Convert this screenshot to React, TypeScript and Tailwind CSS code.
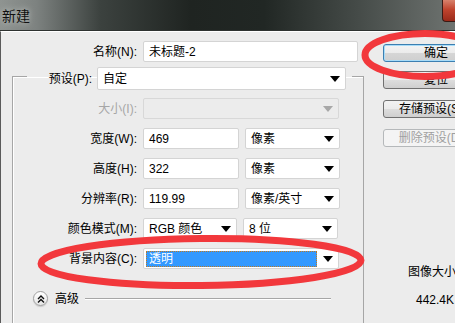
import type { ReactNode } from 'react';

const font = 'font-["Liberation_Sans","Noto_Sans_CJK_SC",sans-serif]';

function Arrow({ disabled }: { disabled?: boolean }) {
  return (
    <svg width="10" height="6" viewBox="0 0 10 6" className="shrink-0">
      <polygon points="0,0 10,0 5,6" fill={disabled ? '#a8a8a8' : '#000'} />
    </svg>
  );
}

function Field({ w, children }: { w: string; children: ReactNode }) {
  return (
    <div className={`${w} h-[21px] bg-white border border-[#d4d4d4] rounded-[2px] flex items-center pl-[5px] text-[12px] text-black`}>
      {children}
    </div>
  );
}

function Select({ w, children, disabled }: { w: string; children?: ReactNode; disabled?: boolean }) {
  return (
    <div
      className={`${w} h-[21px] border rounded-[2px] flex items-center justify-between pl-[5px] pr-[5px] text-[12px] ${
        disabled ? 'bg-[#ececec] border-[#d8d8d8]' : 'bg-white border-[#d4d4d4] text-black'
      }`}
    >
      <span className="flex-1 flex items-center">{children}</span>
      <Arrow disabled={disabled} />
    </div>
  );
}

function Row({ label, disabled, children }: { label: string; disabled?: boolean; children: ReactNode }) {
  return (
    <div className="flex items-center h-[21px]">
      <div className={`w-[124px] text-right text-[12px] ${disabled ? 'text-[#a6a6a6]' : 'text-black'}`}>{label}</div>
      <div className="ml-[6px] flex items-center gap-[6px]">{children}</div>
    </div>
  );
}

function Button({ children, primary, disabled }: { children: ReactNode; primary?: boolean; disabled?: boolean }) {
  return (
    <div
      className={`w-[106px] h-[18px] rounded-[3px] border flex items-center justify-center text-[12px] leading-none ${
        primary
          ? 'border-[#3c7fb1] bg-[linear-gradient(180deg,#f4f4f4_0%,#ebebeb_50%,#d6d6d6_51%,#cfcfcf_100%)] shadow-[inset_0_0_0_1px_#a8dcf8] text-black'
          : disabled
            ? 'border-[#b5b8ba] bg-[#f4f4f4] text-[#a0a0a0]'
            : 'border-[#707070] bg-[linear-gradient(180deg,#f2f2f2_0%,#ebebeb_50%,#dddddd_51%,#cfcfcf_100%)] text-black'
      }`}
    >
      {children}
    </div>
  );
}

export default function App() {
  return (
    <div className={`relative w-[455px] h-[323px] overflow-hidden bg-[#ececec] ${font}`}>
      {/* title bar */}
      <div className="h-[31px] flex justify-between bg-[linear-gradient(90deg,#8f9491_0%,#7d8280_8%,#3c423f_22%,#1f2421_42%,#212724_58%,#444a47_78%,#6e7370_100%)] border-b border-[#2e3230]">
        <div className="pl-[2px] pt-[6px] text-[14px] text-[#111] [text-shadow:0_0_6px_#cfd3d0]">新建</div>
        <div className="w-[13px] h-[22px] rounded-bl-[4px] border-l border-b border-[#3a1a14] bg-[linear-gradient(180deg,#d8826c_0%,#c0442e_45%,#9a2a1a_100%)]" />
      </div>

      {/* body */}
      <div className="flex border-l border-[#5a5a5a] border-t border-t-white h-full">
        <div className="w-[363px] shrink-0">
          <div className="mt-[9px] flex items-center h-[21px]">
            <div className="w-[136px] text-right text-[12px] text-black">名称(N):</div>
            <div className="ml-[6px]">
              <Field w="w-[215px]">未标题-2</Field>
            </div>
          </div>

          <fieldset className="ml-[11px] w-[352px] h-[400px] border border-[#a6a6a6] shadow-[inset_1px_1px_0_#fff] p-0 m-0">
            <legend className="ml-[14px] pt-[5px] pr-[6px] p-0">
              <div className="flex items-center h-[23px]">
                <div className="w-[65px] text-right text-[12px] text-black">预设(P):</div>
                <div className="ml-[5px]">
                  <Select w="w-[249px] h-[23px]">自定</Select>
                </div>
              </div>
            </legend>

            <div className="mt-[8px] flex flex-col gap-[9px]">
              <Row label="大小(I):" disabled>
                <Select w="w-[196px]" disabled />
              </Row>
              <Row label="宽度(W):">
                <Field w="w-[96px]">469</Field>
                <Select w="w-[95px]">像素</Select>
              </Row>
              <Row label="高度(H):">
                <Field w="w-[96px]">322</Field>
                <Select w="w-[95px]">像素</Select>
              </Row>
              <Row label="分辨率(R):">
                <Field w="w-[96px]">119.99</Field>
                <Select w="w-[95px]">像素/英寸</Select>
              </Row>
              <Row label="颜色模式(M):">
                <Select w="w-[94px]">RGB 颜色</Select>
                <Select w="w-[95px]">8 位</Select>
              </Row>
              <Row label="背景内容(C):">
                <div className="w-[196px] h-[21px] bg-white border border-[#d4d4d4] rounded-[2px] flex items-center justify-between pl-[2px] pr-[5px]">
                  <div className="w-[171px] h-[16px] bg-[#3399ff] border border-dotted border-[#c07a20] text-white text-[12px] leading-[14px] pl-[2px]">
                    透明
                  </div>
                  <Arrow />
                </div>
              </Row>
            </div>

            <div className="mt-[22px] flex items-center h-[15px]">
              <div className="ml-[20px] w-[15px] h-[15px] rounded-full border border-[#a0a0a0] bg-[linear-gradient(180deg,#ffffff_0%,#e6e6e6_100%)] flex items-center justify-center shadow-[0_1px_1px_#c8c8c8]">
                <svg width="8" height="8" viewBox="0 0 8 8">
                  <polyline points="1,4 4,1 7,4" fill="none" stroke="#111" strokeWidth="1.4" />
                  <polyline points="1,7.5 4,4.5 7,7.5" fill="none" stroke="#111" strokeWidth="1.4" />
                </svg>
              </div>
              <div className="ml-[7px] text-[12px] text-black">高级</div>
              <div className="ml-[6px] mr-[32px] flex-1 h-[2px] border-t border-[#a6a6a6] border-b border-b-white" />
            </div>
          </fieldset>
        </div>

        {/* buttons */}
        <div className="ml-[19px] w-[106px] shrink-0 pt-[12px] flex flex-col">
          <Button primary>确定</Button>
          <div className="mt-[9px]">
            <Button>复位</Button>
          </div>
          <div className="mt-[11px]">
            <Button>存储预设(S)...</Button>
          </div>
          <div className="mt-[11px]">
            <Button disabled>删除预设(D)...</Button>
          </div>
          <div className="mt-[116px] pl-[25px] text-[12px] text-black whitespace-nowrap">图像大小:</div>
          <div className="mt-[10px] pl-[33px] text-[12px] text-black whitespace-nowrap">442.4K</div>
        </div>
      </div>

      {/* red annotation marks */}
      <svg className="absolute inset-0 pointer-events-none" width="455" height="323" viewBox="0 0 455 323">
        <ellipse cx="425" cy="55" rx="60" ry="21.5" fill="none" stroke="#f2383c" strokeWidth="7" />
        <ellipse cx="201" cy="262" rx="160" ry="23.5" fill="none" stroke="#f2383c" strokeWidth="7" transform="rotate(-0.6 201 262)" />
      </svg>
    </div>
  );
}
